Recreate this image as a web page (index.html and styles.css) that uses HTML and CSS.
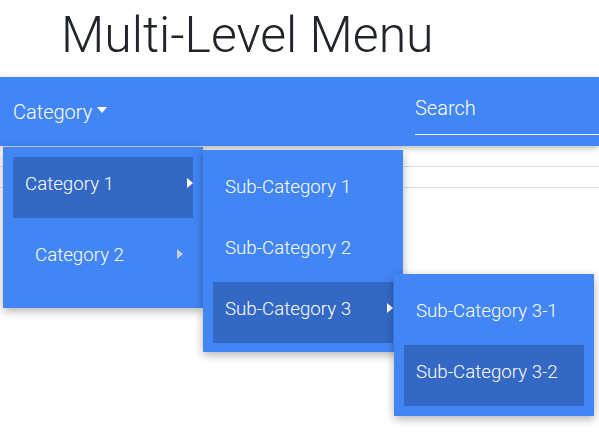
FILE: index.html
```html
<!DOCTYPE html>
<html lang="en">
<head>
<meta charset="utf-8">
<title>Multi-Level Menu</title>
<link rel="stylesheet" href="styles.css">
</head>
<body>
<header class="page-head">
  <h1 class="title">Multi-Level Menu</h1>
</header>
<nav class="navbar">
  <div class="nav-dropdown">
    <a class="nav-toggle" href="#">Category<span class="caret"></span></a>
    <ul class="menu menu-l1">
      <li class="item item-active">
        <span class="label">Category 1</span><span class="arrow"></span>
        <ul class="menu menu-l2">
          <li class="item"><span class="label">Sub-Category 1</span></li>
          <li class="item"><span class="label">Sub-Category 2</span></li>
          <li class="item item-active">
            <span class="label">Sub-Category 3</span><span class="arrow"></span>
            <ul class="menu menu-l3">
              <li class="item"><span class="label">Sub-Category 3-1</span></li>
              <li class="item item-active"><span class="label">Sub-Category 3-2</span></li>
            </ul>
          </li>
        </ul>
      </li>
      <li class="item item-inset">
        <span class="label">Category 2</span><span class="arrow arrow-dim"></span>
      </li>
    </ul>
  </div>
  <input class="search" type="text" placeholder="Search">
</nav>
<main class="content">
  <div class="row"></div>
  <div class="row"></div>
</main>
</body>
</html>
```

FILE: styles.css
```css
* { box-sizing: border-box; }

html, body {
  margin: 0;
  padding: 0;
  background: #ffffff;
  font-family: Roboto, "Liberation Sans", sans-serif;
}

body {
  min-height: 433px;
}

.page-head {
  height: 77px;
  padding-left: 61px;
}

.title {
  margin: 0;
  padding-top: 5px;
  font-size: 50px;
  font-weight: 300;
  line-height: 1.2;
  color: #212529;
}

.navbar {
  position: relative;
  z-index: 2;
  display: flex;
  align-items: center;
  height: 69px;
  background: #4285f4;
  box-shadow: 0 2px 6px rgba(0, 0, 0, 0.28);
}

.nav-toggle {
  display: block;
  padding-left: 13px;
  padding-top: 1px;
  color: #ffffff;
  font-size: 20px;
  font-weight: 300;
  text-decoration: none;
  line-height: 23px;
}

.caret {
  display: inline-block;
  width: 0;
  height: 0;
  margin-left: 5px;
  vertical-align: 0.255em;
  border-top: 6px solid #ffffff;
  border-left: 5.5px solid transparent;
  border-right: 5.5px solid transparent;
}

.search {
  align-self: flex-start;
  margin-left: auto;
  margin-top: 20px;
  width: 184px;
  padding: 0 0 14px 0;
  border: none;
  border-bottom: 1px solid #ffffff;
  background: transparent;
  color: #ffffff;
  font-family: Roboto, "Liberation Sans", sans-serif;
  font-size: 20px;
  font-weight: 300;
  line-height: 23px;
  outline: none;
}

.search::placeholder {
  color: #ffffff;
  opacity: 1;
}

.menu {
  position: absolute;
  width: 200px;
  margin: 0;
  padding: 10px;
  list-style: none;
  background: #4285f4;
  box-shadow: 0 3px 9px rgba(0, 0, 0, 0.3);
}

.menu-l1 {
  left: 3px;
  top: 70px;
}

.menu-l2 {
  left: calc(100% + 10px);
  top: -7px;
  padding-bottom: 9px;
  z-index: 1;
}

.menu-l3 {
  left: calc(100% + 1px);
  top: -8px;
  z-index: 1;
}

.item {
  position: relative;
  display: flex;
  align-items: center;
  height: 61px;
  padding: 16.5px 0 23.5px 12px;
  color: #ffffff;
  font-size: 18.7px;
  font-weight: 300;
  line-height: 21px;
}

.item-active {
  background: #3468c5;
}

.item-inset {
  margin: 10px 10px 9px 10px;
  padding-left: 12px;
}

.label {
  white-space: nowrap;
}

.arrow {
  width: 0;
  height: 0;
  margin-left: auto;
  margin-top: -3px;
  border-top: 5.5px solid transparent;
  border-bottom: 5.5px solid transparent;
  border-left: 6px solid #ffffff;
}

.arrow-dim {
  border-left-color: #c9cbd3;
}

.content {
  position: relative;
  z-index: 1;
}

.row {
  height: 21px;
  border-bottom: 1px solid #dedede;
}
```
